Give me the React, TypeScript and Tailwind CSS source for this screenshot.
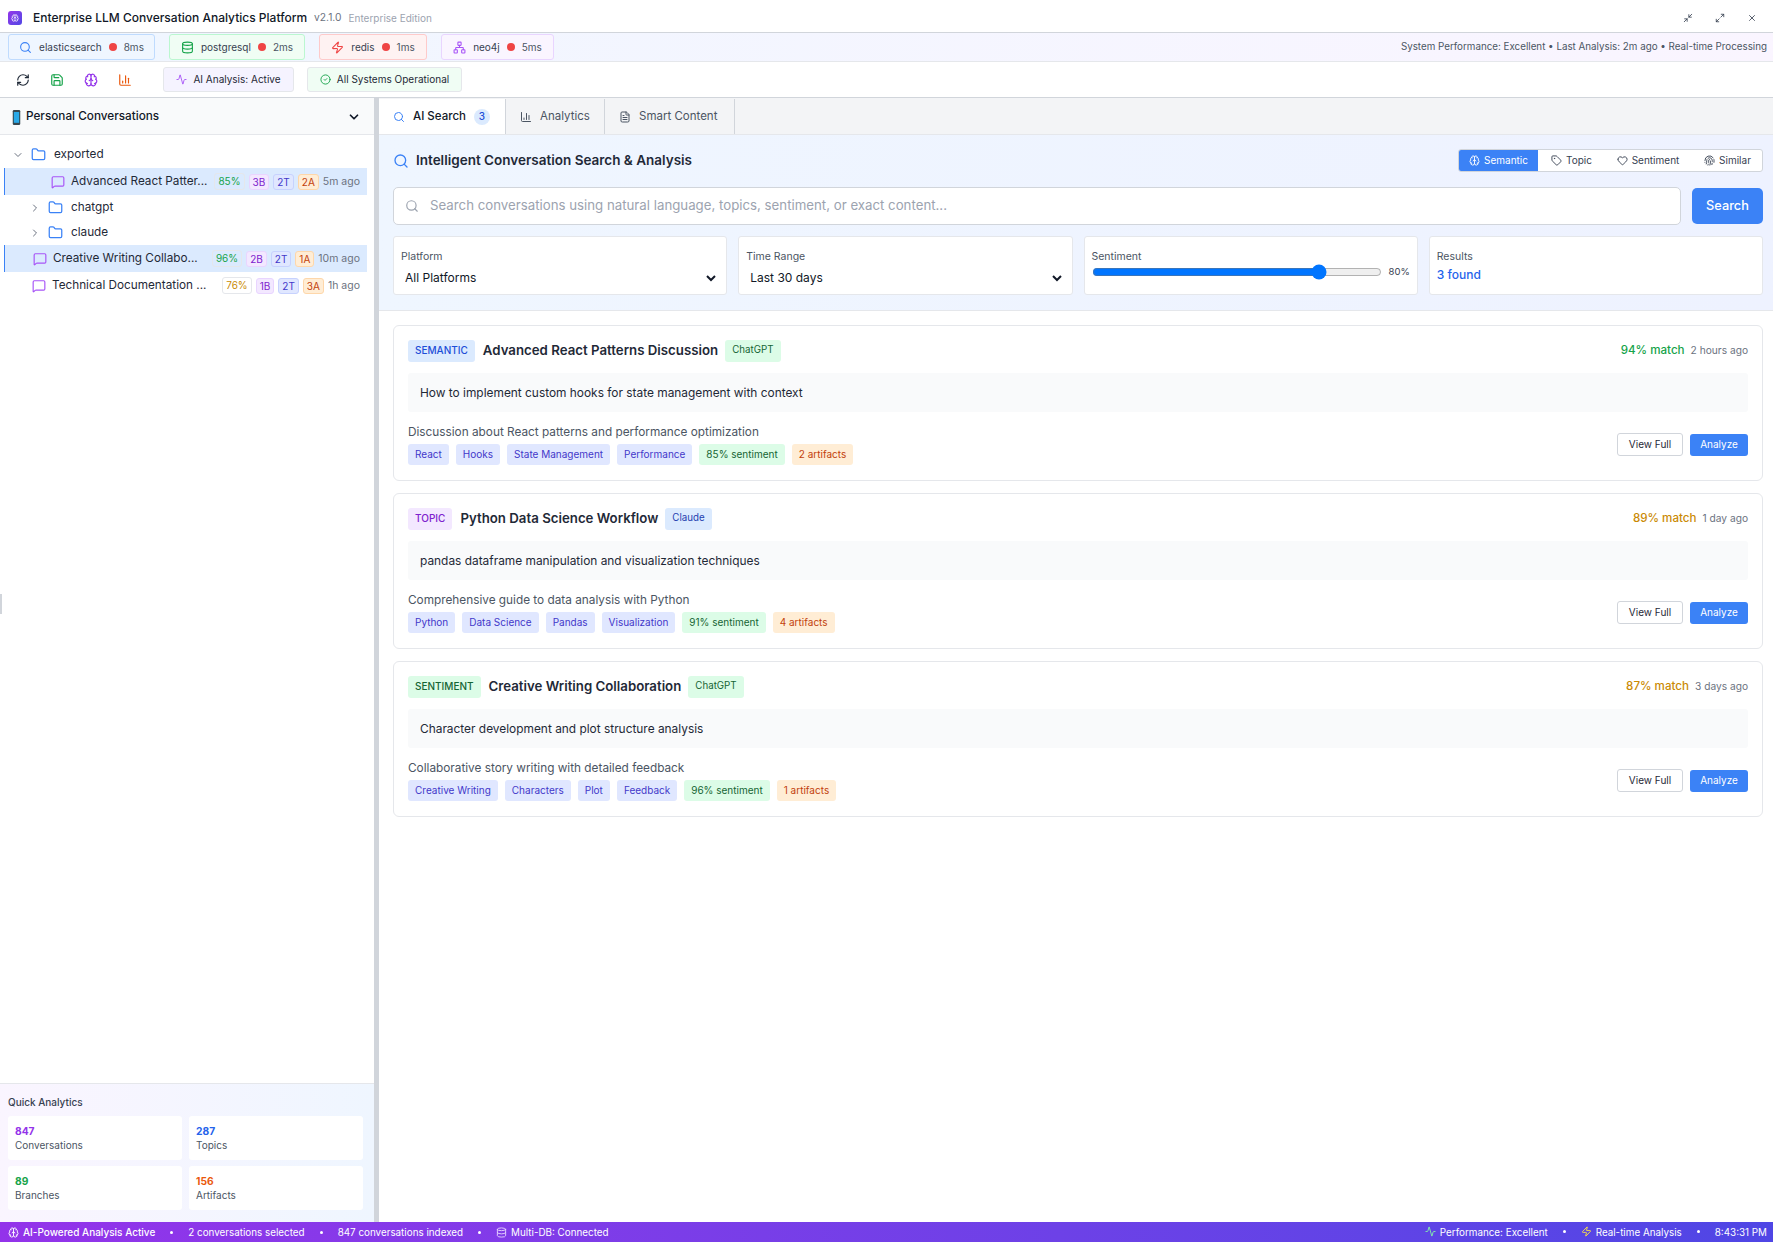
import { Activity, BarChart3, Brain, ChevronDown, ChevronRight, CircleCheck, Database, FileText, Fingerprint, Folder, Heart, Maximize2, MessageSquare, Minimize2, Network, RefreshCw, Save, Search, Tag, X, Zap } from "lucide-react";
import type { ReactNode } from "react";

const services = [
  { name: "elasticsearch", ms: "8ms", icon: <Search className="size-[13px] text-[#3b82f6]" />, cls: "border-[#bfdbfe] bg-[#eff6ff] w-[147px]" },
  { name: "postgresql", ms: "2ms", icon: <Database className="size-[13px] text-[#16a34a]" />, cls: "border-[#bbf7d0] bg-[#f0fdf4] w-[136px]" },
  { name: "redis", ms: "1ms", icon: <Zap className="size-[13px] text-[#ef4444]" />, cls: "border-[#fecaca] bg-[#fef2f2] w-[108px]" },
  { name: "neo4j", ms: "5ms", icon: <Network className="size-[13px] text-[#a855f7]" />, cls: "border-[#e9d5ff] bg-[#faf5ff] w-[113px]" },
];

const results = [
  {
    kind: "SEMANTIC",
    kindCls: "bg-[#dbeafe] text-[#1d4ed8]",
    title: "Advanced React Patterns Discussion",
    platform: "ChatGPT",
    platformCls: "bg-[#dcfce7] text-[#166534]",
    match: "94% match",
    matchCls: "text-[#16a34a]",
    when: "2 hours ago",
    query: "How to implement custom hooks for state management with context",
    summary: "Discussion about React patterns and performance optimization",
    tags: ["React", "Hooks", "State Management", "Performance"],
    sentiment: "85% sentiment",
    artifacts: "2 artifacts",
  },
  {
    kind: "TOPIC",
    kindCls: "bg-[#f3e8ff] text-[#7e22ce]",
    title: "Python Data Science Workflow",
    platform: "Claude",
    platformCls: "bg-[#dbeafe] text-[#1e40af]",
    match: "89% match",
    matchCls: "text-[#ca8a04]",
    when: "1 day ago",
    query: "pandas dataframe manipulation and visualization techniques",
    summary: "Comprehensive guide to data analysis with Python",
    tags: ["Python", "Data Science", "Pandas", "Visualization"],
    sentiment: "91% sentiment",
    artifacts: "4 artifacts",
  },
  {
    kind: "SENTIMENT",
    kindCls: "bg-[#dcfce7] text-[#166534]",
    title: "Creative Writing Collaboration",
    platform: "ChatGPT",
    platformCls: "bg-[#dcfce7] text-[#166534]",
    match: "87% match",
    matchCls: "text-[#ca8a04]",
    when: "3 days ago",
    query: "Character development and plot structure analysis",
    summary: "Collaborative story writing with detailed feedback",
    tags: ["Creative Writing", "Characters", "Plot", "Feedback"],
    sentiment: "96% sentiment",
    artifacts: "1 artifacts",
  },
];

function TreeBadges({ pct, pctCls, b, a, when }: { pct: string; pctCls: string; b: string; a: string; when: string }) {
  return (
    <div className="ml-auto flex shrink-0 items-center gap-[4px] text-[10px]">
      <span className={`rounded-[3px] border border-[#e5e7eb] px-[3px] leading-[15px] ${pctCls}`}>{pct}</span>
      <span className="rounded-[3px] border border-[#e9d5ff] bg-[#f3e8ff] px-[3px] leading-[14px] text-[#7e22ce]">{b}</span>
      <span className="rounded-[3px] border border-[#c7d2fe] bg-[#e0e7ff] px-[3px] leading-[14px] text-[#4338ca]">2T</span>
      <span className="rounded-[3px] border border-[#fed7aa] bg-[#ffedd5] px-[3px] leading-[14px] text-[#c2410c]">{a}</span>
      <span className="text-[10.5px] text-[#6b7280]">{when}</span>
    </div>
  );
}

function FolderRow({ label, open, indent }: { label: string; open?: boolean; indent: string }) {
  return (
    <div className={`flex h-[25px] items-center text-[11.75px] text-[#1f2937] ${indent}`}>
      {open ? <ChevronDown className="size-[12px] text-[#6b7280]" /> : <ChevronRight className="size-[12px] text-[#6b7280]" />}
      <Folder className="ml-[7px] size-[15px] text-[#3b82f6]" />
      <span className="ml-[8px]">{label}</span>
    </div>
  );
}

function ConvRow({ title, selected, indent, children }: { title: string; selected?: boolean; indent: string; children: ReactNode }) {
  return (
    <div className={`flex h-[27px] items-center pr-[7px] text-[11.75px] text-[#1f2937] ${indent} ${selected ? "border-l border-[#3b82f6] bg-[#dbeafe]" : "border-l border-transparent"}`}>
      <MessageSquare className="size-[14px] shrink-0 text-[#a855f7]" />
      <span className="ml-[6px] whitespace-nowrap">{title}</span>
      {children}
    </div>
  );
}

function Stat({ value, label, cls }: { value: string; label: string; cls: string }) {
  return (
    <div className="rounded-[3px] bg-white px-[7px] py-[8px] leading-[14px]">
      <div className={`text-[10.25px] font-bold ${cls}`}>{value}</div>
      <div className="text-[10px] text-[#4b5563]">{label}</div>
    </div>
  );
}

function FilterCard({ label, children }: { label: string; children: ReactNode }) {
  return (
    <div className="h-[59px] flex-1 rounded-[3px] border border-[#e5e7eb] bg-white px-[7px] pt-[13px]">
      <div className="text-[10.5px] leading-[14px] text-[#4b5563]">{label}</div>
      {children}
    </div>
  );
}

function Dot() {
  return <span className="block size-[3px] rounded-full bg-white" />;
}

export default function App() {
  return (
    <div className="relative flex h-[1242px] w-[1773px] flex-col overflow-hidden bg-white text-[#111827]" style={{ fontFamily: "Inter, 'Noto Sans', sans-serif" }}>
      {/* title bar */}
      <div className="flex h-[33px] shrink-0 items-center border-b border-[#d1d5db] bg-white pl-[8px] pr-[16px] pt-[4px]">
        <div className="grid size-[14px] place-items-center rounded-[3px] bg-gradient-to-br from-[#9333ea] to-[#4f46e5]">
          <Brain className="size-[8px] text-white" />
        </div>
        <span className="ml-[11px] text-[12px] font-medium">Enterprise LLM Conversation Analytics Platform</span>
        <span className="ml-[7px] text-[10.25px] text-[#6b7280]">v2.1.0</span>
        <span className="ml-[7px] text-[10px] text-[#9ca3af]">Enterprise Edition</span>
        <div className="ml-auto flex items-center gap-[22px] text-[#374151]">
          <Minimize2 className="size-[10px]" />
          <Maximize2 className="size-[10px]" />
          <X className="size-[10px]" />
        </div>
      </div>

      {/* services */}
      <div className="flex h-[29px] shrink-0 items-center gap-[14px] border-b border-[#e5e7eb] bg-gradient-to-r from-[#eff6ff] to-[#faf5ff] pl-[8px] pr-[6px]">
        {services.map((s) => (
          <div key={s.name} className={`flex h-[26px] items-center justify-center gap-[7px] rounded-[3px] border text-[10px] text-[#374151] ${s.cls}`}>
            {s.icon}
            <span>{s.name}</span>
            <span className="size-[8px] rounded-full bg-[#ef4444]" />
            <span className="text-[#4b5563]">{s.ms}</span>
          </div>
        ))}
        <span className="ml-auto text-[9.8px] text-[#4b5563]">System Performance: Excellent • Last Analysis: 2m ago • Real-time Processing</span>
      </div>

      {/* toolbar */}
      <div className="flex h-[36px] shrink-0 items-center border-b border-[#d1d5db] bg-white pl-[16px]">
        <RefreshCw className="size-[14px] text-[#1f2937]" />
        <Save className="ml-[20px] size-[14px] text-[#16a34a]" />
        <Brain className="ml-[20px] size-[14px] text-[#9333ea]" />
        <BarChart3 className="ml-[20px] size-[14px] text-[#ea580c]" />
        <div className="ml-[31px] flex h-[25px] w-[131px] items-center justify-center gap-[6px] rounded-[3px] border border-[#e5e7eb] bg-[#f5f3ff] text-[10px] text-[#1f2937]">
          <Activity className="size-[11px] text-[#a855f7]" />
          AI Analysis: Active
        </div>
        <div className="ml-[13px] flex h-[25px] w-[155px] items-center justify-center gap-[6px] rounded-[3px] border border-[#e5e7eb] bg-[#f0fdf4] text-[10px] text-[#1f2937]">
          <CircleCheck className="size-[11px] text-[#16a34a]" />
          All Systems Operational
        </div>
      </div>

      <div className="flex min-h-0 flex-1">
        {/* sidebar */}
        <aside className="flex w-[374px] shrink-0 flex-col bg-white">
          <div className="flex h-[37px] shrink-0 items-center border-b border-[#e5e7eb] bg-[#f9fafb] pl-[12px] pr-[13px] pt-[2px]">
            <svg viewBox="0 0 10 18" className="h-[15px] w-[9px] shrink-0">
              <rect x="0.5" y="0" width="9" height="18" rx="1.6" fill="#37474f" />
              <rect x="1.8" y="2.4" width="6.4" height="13" fill="#29a9e8" />
            </svg>
            <span className="ml-[5px] text-[11.75px] font-medium">Personal Conversations</span>
            <ChevronDown className="ml-auto size-[14px] text-[#111827]" strokeWidth={3} />
          </div>
          <div className="min-h-0 flex-1 pl-[4px] pt-[7px]">
            <div className="mr-[7px]">
              <FolderRow label="exported" open indent="pl-[8px]" />
              <div className="mt-[1px]">
                <ConvRow title="Advanced React Patter..." selected indent="pl-[46px]">
                  <TreeBadges pct="85%" pctCls="text-[#16a34a]" b="3B" a="2A" when="5m ago" />
                </ConvRow>
              </div>
              <FolderRow label="chatgpt" indent="pl-[25px]" />
              <FolderRow label="claude" indent="pl-[25px]" />
              <ConvRow title="Creative Writing Collabo..." selected indent="pl-[28px]">
                <TreeBadges pct="96%" pctCls="text-[#16a34a]" b="2B" a="1A" when="10m ago" />
              </ConvRow>
              <ConvRow title="Technical Documentation ..." indent="pl-[27px]">
                <TreeBadges pct="76%" pctCls="text-[#ca8a04]" b="1B" a="3A" when="1h ago" />
              </ConvRow>
            </div>
          </div>
          <div className="h-[139px] shrink-0 border-t border-[#e5e7eb] bg-gradient-to-r from-[#faf5ff] to-[#eff6ff] px-[8px] pt-[10px]">
            <div className="text-[10px] font-medium leading-[16px] text-[#374151]">Quick Analytics</div>
            <div className="mt-[6px] grid w-[355px] grid-cols-2 gap-x-[7px] gap-y-[6px]">
              <Stat value="847" label="Conversations" cls="text-[#9333ea]" />
              <Stat value="287" label="Topics" cls="text-[#2563eb]" />
              <Stat value="89" label="Branches" cls="text-[#16a34a]" />
              <Stat value="156" label="Artifacts" cls="text-[#ea580c]" />
            </div>
          </div>
        </aside>
        <div className="w-[5px] shrink-0 bg-[#d1d5db]" />

        {/* main */}
        <main className="flex min-w-0 flex-1 flex-col bg-white">
          <div className="flex h-[37px] shrink-0 border-b border-[#e5e7eb] bg-[#f3f4f6] pt-[1px] text-[11.5px]">
            <div className="flex w-[127px] items-center border-r border-[#d1d5db] bg-white pl-[14px] font-medium">
              <Search className="size-[12px] text-[#3b82f6]" />
              <span className="ml-[8px]">AI Search</span>
              <span className="ml-[8px] grid size-[16px] place-items-center rounded-full bg-[#dbeafe] text-[10px] text-[#1d4ed8]">3</span>
            </div>
            <div className="flex w-[99px] items-center border-r border-[#d1d5db] pl-[14px] text-[#4b5563]">
              <BarChart3 className="size-[12px]" />
              <span className="ml-[8px]">Analytics</span>
            </div>
            <div className="flex w-[130px] items-center border-r border-[#d1d5db] pl-[14px] text-[#4b5563]">
              <FileText className="size-[12px]" />
              <span className="ml-[8px]">Smart Content</span>
            </div>
          </div>

          <div className="h-[176px] shrink-0 border-b border-[#e5e7eb] bg-gradient-to-r from-[#eff6ff] to-[#eef2ff] pl-[14px] pr-[10px] pt-[14px]">
            <div className="flex items-center">
              <Search className="size-[16px] text-[#3b82f6]" />
              <span className="ml-[7px] text-[13.5px] font-semibold text-[#1f2937]">Intelligent Conversation Search &amp; Analysis</span>
              <div className="ml-auto flex h-[23px] w-[305px] overflow-hidden rounded-[3px] border border-[#d1d5db] bg-white text-[10px] text-[#374151]">
                <div className="flex w-[79px] items-center justify-center gap-[4px] bg-[#3b82f6] text-white">
                  <Brain className="size-[11px]" />
                  Semantic
                </div>
                <div className="flex w-[67px] items-center justify-center gap-[4px]">
                  <Tag className="size-[11px]" />
                  Topic
                </div>
                <div className="flex w-[86px] items-center justify-center gap-[4px]">
                  <Heart className="size-[11px]" />
                  Sentiment
                </div>
                <div className="flex flex-1 items-center justify-center gap-[4px] pl-[2px]">
                  <Fingerprint className="size-[11px]" />
                  Similar
                </div>
              </div>
            </div>
            <div className="mt-[15px] flex items-center gap-[11px]">
              <div className="flex h-[38px] flex-1 items-center rounded-[5px] border border-[#d1d5db] bg-white pl-[11px]">
                <Search className="size-[14px] text-[#9ca3af]" />
                <input
                  readOnly
                  placeholder="Search conversations using natural language, topics, sentiment, or exact content..."
                  className="ml-[11px] flex-1 bg-transparent text-[13.25px] outline-none placeholder:text-[#9ca3af]"
                />
              </div>
              <button type="button" className="h-[36px] w-[71px] rounded-[5px] bg-[#3b82f6] text-[12.75px] font-medium text-white">
                Search
              </button>
            </div>
            <div className="mt-[11px] flex gap-[11px]">
              <FilterCard label="Platform">
                <select className="h-[22px] w-full bg-transparent text-[12px] outline-none">
                  <option>All Platforms</option>
                </select>
              </FilterCard>
              <FilterCard label="Time Range">
                <select className="h-[22px] w-full bg-transparent text-[12px] outline-none">
                  <option>Last 30 days</option>
                </select>
              </FilterCard>
              <FilterCard label="Sentiment">
                <div className="flex items-center gap-[7px]">
                  <input type="range" readOnly defaultValue={80} className="m-0 min-w-0 flex-1" />
                  <span className="text-[9.5px] text-[#374151]">80%</span>
                </div>
              </FilterCard>
              <FilterCard label="Results">
                <div className="mt-[2px] text-[12px] font-medium text-[#2563eb]">3 found</div>
              </FilterCard>
            </div>
          </div>

          <div className="flex flex-col gap-[12px] pl-[14px] pr-[10px] pt-[14px]">
            {results.map((r) => (
              <div key={r.title} className="h-[156px] rounded-[6px] border border-[#e5e7eb] bg-white px-[14px] pt-[13px]">
                <div className="flex h-[23px] items-center">
                  <span className={`flex h-[22px] items-center rounded-[3px] px-[7px] text-[10px] font-medium ${r.kindCls}`}>{r.kind}</span>
                  <span className="ml-[8px] text-[13.25px] font-semibold text-[#1f2937]">{r.title}</span>
                  <span className={`ml-[7px] flex h-[22px] items-center rounded-[3px] px-[7px] text-[9.75px] ${r.platformCls}`}>{r.platform}</span>
                  <span className={`ml-auto text-[11.6px] font-medium ${r.matchCls}`}>{r.match}</span>
                  <span className="ml-[6px] text-[10.2px] text-[#6b7280]">{r.when}</span>
                </div>
                <div className="mt-[11px] flex h-[39px] items-center rounded-[3px] bg-[#f9fafb] px-[12px] text-[11.9px] text-[#1f2937]">{r.query}</div>
                <div className="mt-[12px] flex items-center justify-between">
                  <div>
                    <div className="text-[11.8px] leading-[17px] text-[#4b5563]">{r.summary}</div>
                    <div className="mt-[3px] flex gap-[7px] text-[10px]">
                      {r.tags.map((t) => (
                        <span key={t} className="flex h-[21px] items-center rounded-[3px] bg-[#e0e7ff] px-[7px] text-[#4338ca]">
                          {t}
                        </span>
                      ))}
                      <span className="flex h-[21px] items-center rounded-[3px] bg-[#dcfce7] px-[7px] text-[#166534]">{r.sentiment}</span>
                      <span className="flex h-[21px] items-center rounded-[3px] bg-[#ffedd5] px-[7px] text-[#c2410c]">{r.artifacts}</span>
                    </div>
                  </div>
                  <div className="flex items-center gap-[7px] text-[10px]">
                    <button type="button" className="h-[23px] w-[66px] rounded-[3px] border border-[#d1d5db] bg-white text-[#1f2937]">
                      View Full
                    </button>
                    <button type="button" className="h-[22px] w-[58px] rounded-[3px] bg-[#3b82f6] text-white">
                      Analyze
                    </button>
                  </div>
                </div>
              </div>
            ))}
          </div>
        </main>
      </div>

      {/* status bar */}
      <div className="flex h-[20px] shrink-0 items-center bg-gradient-to-r from-[#9333ea] to-[#4f46e5] pl-[8px] pr-[6px] text-[9.85px] text-white">
        <Brain className="size-[11px]" />
        <span className="ml-[4px] text-[10px] font-medium">AI-Powered Analysis Active</span>
        <div className="mx-[15px]"><Dot /></div>
        <span>2 conversations selected</span>
        <div className="mx-[15px]"><Dot /></div>
        <span>847 conversations indexed</span>
        <div className="mx-[15px]"><Dot /></div>
        <Database className="size-[11px] text-[#e9d5ff]" />
        <span className="ml-[4px]">Multi-DB: Connected</span>
        <div className="ml-auto flex items-center">
          <Activity className="size-[11px] text-[#86efac]" />
          <span className="ml-[4px]">Performance: Excellent</span>
          <div className="mx-[15px]"><Dot /></div>
          <Zap className="size-[11px] text-[#fde047]" />
          <span className="ml-[4px]">Real-time Analysis</span>
          <div className="mx-[15px]"><Dot /></div>
          <span>8:43:31 PM</span>
        </div>
      </div>

      {/* window edge grip */}
      <div className="absolute left-0 top-[594px] h-[20px] w-[2px] bg-[#d1d5db]" />
    </div>
  );
}
